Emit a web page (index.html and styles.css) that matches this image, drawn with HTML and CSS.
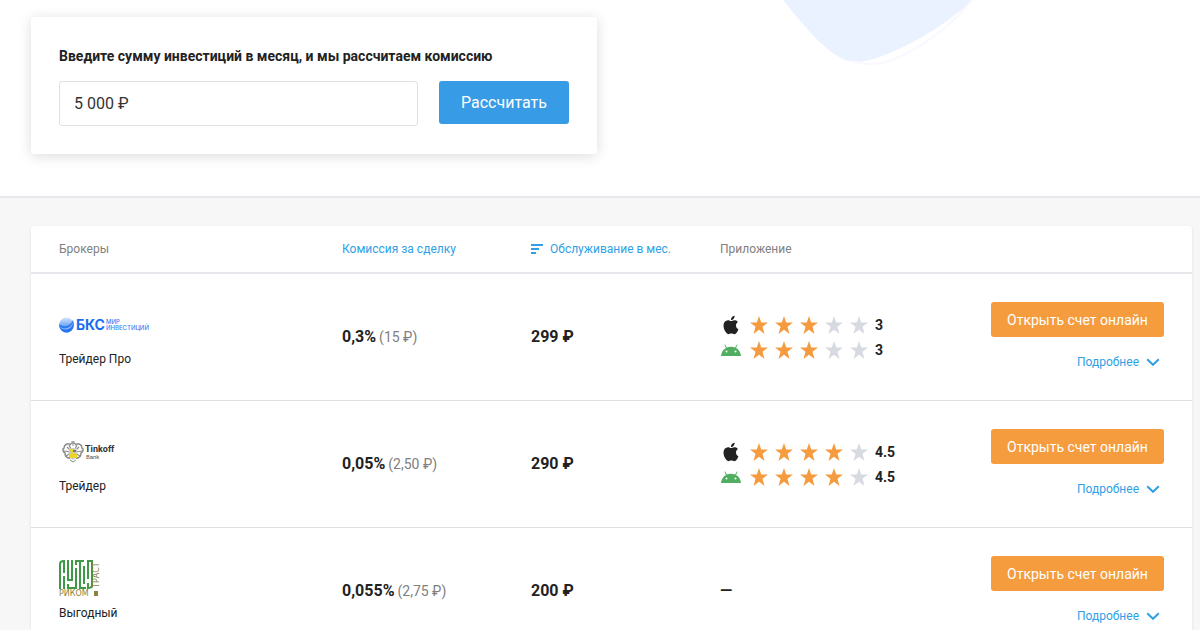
FILE: index.html
```html
<!DOCTYPE html>
<html lang="ru">
<head>
<meta charset="utf-8">
<title>Сравнение брокеров</title>
<meta name="viewport" content="width=device-width, initial-scale=1">
<link rel="stylesheet" href="styles.css">
</head>
<body>
<svg class="defs" width="0" height="0" aria-hidden="true">
  <symbol id="star" viewBox="0 0 18 18"><path d="M9 0l2.200 6.600H18l-5.500 4.200L14.500 18 9 13.700 3.500 18l2-7.200L0 6.600h6.800z"/></symbol>
  <symbol id="apple" viewBox="0 0 24 24"><path d="M18.710 19.500c-.83 1.240-1.710 2.450-3.050 2.470-1.340.03-1.770-.79-3.290-.79-1.530 0-2 .77-3.270.82-1.310.05-2.300-1.320-3.140-2.530C4.250 17 2.940 12.450 4.700 9.390c.87-1.520 2.430-2.480 4.120-2.510 1.280-.02 2.500.87 3.290.87.78 0 2.260-1.070 3.810-.91.65.03 2.470.26 3.640 1.980-.09.06-2.170 1.280-2.150 3.810.03 3.020 2.650 4.030 2.680 4.040-.03.07-.42 1.440-1.380 2.830M13 3.500c.73-.83 1.940-1.460 2.940-1.500.13 1.170-.34 2.350-1.040 3.190-.69.85-1.830 1.510-2.950 1.420-.15-1.150.41-2.350 1.050-3.110z"/></symbol>
  <symbol id="android" viewBox="0 0 20 12"><path d="M0 12C.3 8.300 2.200 5.500 5 4L3.400.8l.7-.4L5.900 3.600a10.500 10.500 0 0 1 8.200 0L15.900.4l.7.4L15 4c2.800 1.500 4.700 4.300 5 8zM5.500 8.600a1 1 0 1 0 0-2 1 1 0 0 0 0 2zm9 0a1 1 0 1 0 0-2 1 1 0 0 0 0 2z"/></symbol>
  <symbol id="chevron" viewBox="0 0 14 8"><path d="M1.200 1.200L7 6.800l5.800-5.600" fill="none" stroke="currentColor" stroke-width="2"/></symbol>
</svg>

<header class="hero">
  <svg class="blob" viewBox="0 0 200 70" width="200" height="70" aria-hidden="true">
    <path d="M3 0C25 27 52 62 76 62C103 62 165 28 192 0" fill="#ebf2ff"/>
    <path d="M72 61C84 65 96 66 112 60C140 49 170 27 192 0" fill="none" stroke="#f8f9fe" stroke-width="2"/>
  </svg>
  <form class="calc">
    <label class="calc-label" for="sum">Введите сумму инвестиций в месяц, и мы рассчитаем комиссию</label>
    <div class="calc-row">
      <input class="calc-input" id="sum" type="text" value="5 000 ₽">
      <button class="calc-button" type="button">Рассчитать</button>
    </div>
  </form>
</header>

<main class="content">
  <table class="brokers">
    <thead>
      <tr>
        <th class="col-name" scope="col">Брокеры</th>
        <th class="col-value" scope="col"><a class="sort" href="#">Комиссия за сделку</a></th>
        <th class="col-value" scope="col"><a class="sort" href="#"><svg class="sort-icon" viewBox="0 0 12 10" width="12" height="10" aria-hidden="true"><path d="M0 1h12M0 5h8M0 9h5" stroke="currentColor" stroke-width="2"/></svg>Обслуживание в мес.</a></th>
        <th scope="col">Приложение</th>
        <th scope="col"></th>
      </tr>
    </thead>
    <tbody>
      <tr>
        <td>
          <svg class="logo" viewBox="0 0 90 40" width="90" height="40" role="img" aria-label="БКС Мир инвестиций">
            <defs><linearGradient id="globe" x1="0" y1="0" x2="0" y2="1"><stop offset="0" stop-color="#d5e5fc"/><stop offset="1" stop-color="#2575ee"/></linearGradient></defs>
            <circle cx="7.500" cy="20" r="7.500" fill="url(#globe)"/>
            <path d="M0 19C3 22 10 23 14 15C17 22 12 28 7 27.500C3 27 0 23 0 19z" fill="#1b6ff0" opacity=".75"/>
            <path d="M1 22c5 3 10 1 13-4-1 6-8 9-13 4z" fill="#8bb8fa"/>
            <text class="logo-bks" x="17" y="25">БКС</text>
            <text class="logo-tiny" x="47" y="19">МИР</text>
            <text class="logo-tiny" x="47" y="25">ИНВЕСТИЦИЙ</text>
          </svg>
          <div class="plan">Трейдер Про</div>
        </td>
        <td><b class="amount">0,3%</b> <span class="note">(15 ₽)</span></td>
        <td><b class="amount">299 ₽</b></td>
        <td>
          <div class="rating"><svg class="os os-apple"><use href="#apple"/></svg><svg class="star on"><use href="#star"/></svg><svg class="star on"><use href="#star"/></svg><svg class="star on"><use href="#star"/></svg><svg class="star"><use href="#star"/></svg><svg class="star"><use href="#star"/></svg><span class="score">3</span></div>
          <div class="rating"><svg class="os os-android"><use href="#android"/></svg><svg class="star on"><use href="#star"/></svg><svg class="star on"><use href="#star"/></svg><svg class="star on"><use href="#star"/></svg><svg class="star"><use href="#star"/></svg><svg class="star"><use href="#star"/></svg><span class="score">3</span></div>
        </td>
        <td><div class="actions"><button class="open" type="button">Открыть счет онлайн</button><a class="more" href="#">Подробнее<svg class="chevron"><use href="#chevron"/></svg></a></div></td>
      </tr>
      <tr>
        <td>
          <svg class="logo" viewBox="0 0 90 40" width="90" height="40" role="img" aria-label="Tinkoff Bank">
            <g fill="none" stroke="#8c8c8c">
              <path d="M12 13C9 10 5 13 5 16c-2 1-1 4 1 5 0 3 2 5 5 5M16 13c3-3 7 0 7 3 2 1 1 4-1 5 0 3-2 5-5 5" stroke-width="1.500"/>
              <path d="M8 15l4 4M5 19l6 1M7 24l5-3M20 15l-4 4M23 19l-6 1M21 24l-5-3M10 13l2 4M18 13l-2 4M10 27l2-4M18 27l-2-4" stroke-width="1.200"/>
              <path d="M11 12l3-1 3 1M12 10h4M14 9v5M11 28l3 2 3-2" stroke-width="1"/>
            </g>
            <path d="M10 16h8v9l-4 3-4-3z" fill="#c9c9c9"/>
            <path d="M11 17h3v4l4 1v4h-7v-4h1z" fill="#ecd52b"/>
            <path d="M14 18h3v2h-3z" fill="#777"/>
            <text class="logo-tinkoff" x="26" y="20">Tinkoff</text>
            <text class="logo-bank" x="27" y="27">Bank</text>
          </svg>
          <div class="plan">Трейдер</div>
        </td>
        <td><b class="amount">0,05%</b> <span class="note">(2,50 ₽)</span></td>
        <td><b class="amount">290 ₽</b></td>
        <td>
          <div class="rating"><svg class="os os-apple"><use href="#apple"/></svg><svg class="star on"><use href="#star"/></svg><svg class="star on"><use href="#star"/></svg><svg class="star on"><use href="#star"/></svg><svg class="star on"><use href="#star"/></svg><svg class="star"><use href="#star"/></svg><span class="score">4.5</span></div>
          <div class="rating"><svg class="os os-android"><use href="#android"/></svg><svg class="star on"><use href="#star"/></svg><svg class="star on"><use href="#star"/></svg><svg class="star on"><use href="#star"/></svg><svg class="star on"><use href="#star"/></svg><svg class="star"><use href="#star"/></svg><span class="score">4.5</span></div>
        </td>
        <td><div class="actions"><button class="open" type="button">Открыть счет онлайн</button><a class="more" href="#">Подробнее<svg class="chevron"><use href="#chevron"/></svg></a></div></td>
      </tr>
      <tr>
        <td>
          <svg class="logo" viewBox="0 0 90 40" width="90" height="40" role="img" aria-label="Риком-Траст">
            <g fill="none" stroke="#3f9a47" stroke-width="2">
              <path d="M1 30V5Q1 2 5 2V14M5 30V17M9 1V21H13V1M9 30V25M8 29H17V9M16 2H25M21 2V29H27M17 6V1M25 7V25M29 1V20M29 2H33V26Q33 29 29 29V24"/>
            </g>
            <text class="logo-rikom" x="0" y="37">РИКОМ</text>
            <path d="M35 32h4v5h-4z" fill="#8a843c"/>
            <text class="logo-rikom" transform="translate(40 29) rotate(-90)" x="0" y="0">ТРАСТ</text>
          </svg>
          <div class="plan">Выгодный</div>
        </td>
        <td><b class="amount">0,055%</b> <span class="note">(2,75 ₽)</span></td>
        <td><b class="amount">200 ₽</b></td>
        <td><b class="amount">—</b></td>
        <td><div class="actions"><button class="open" type="button">Открыть счет онлайн</button><a class="more" href="#">Подробнее<svg class="chevron"><use href="#chevron"/></svg></a></div></td>
      </tr>
    </tbody>
  </table>
</main>
</body>
</html>
```

FILE: styles.css
```css
* { box-sizing: border-box; }

body {
  margin: 0;
  background: #f7f7f7;
  color: #222;
  font-family: Roboto, "Noto Sans", sans-serif;
  font-size: 12px;
  line-height: 20px;
}

.defs { position: absolute; }

.hero {
  position: relative;
  padding: 17px 31px 42px;
  background: #fff;
  border-bottom: 2px solid #e8e8ec;
}

.blob {
  position: absolute;
  top: 0;
  left: 65%;
}

.calc {
  position: relative;
  max-width: 566px;
  padding: 29px 28px 28px;
  background: #fff;
  border-radius: 3px;
  box-shadow: 0 2px 14px rgba(0, 0, 0, .14);
}

.calc-label {
  display: block;
  margin-bottom: 15px;
  font-size: 14px;
  font-weight: 700;
}

.calc-row {
  display: flex;
  align-items: flex-start;
  gap: 21px;
}

.calc-input {
  flex: 1;
  min-width: 0;
  height: 45px;
  padding: 0 14px;
  border: 1px solid #dfe0e6;
  border-radius: 3px;
  color: #333;
  font: inherit;
  font-size: 16px;
}

.calc-button {
  width: 130px;
  height: 43px;
  padding: 0;
  border: 0;
  border-radius: 3px;
  background: #389be6;
  color: #fff;
  font: inherit;
  font-size: 16px;
}

.content { padding: 28px 8px 28px 31px; }

.brokers {
  width: 100%;
  table-layout: fixed;
  border-collapse: separate;
  border-spacing: 0;
  background: #fff;
  border-radius: 3px;
  box-shadow: 0 1px 3px rgba(0, 0, 0, .1);
}

.col-name { width: 311px; }
.col-value { width: 189px; }

th {
  height: 48px;
  padding: 0;
  border-bottom: 2px solid #e8e8ec;
  color: #808080;
  font-weight: 400;
  text-align: left;
}

td {
  padding: 0;
  border-bottom: 1px solid #dedfe3;
  vertical-align: middle;
}

th:first-child { padding-left: 28px; }
td:first-child { padding: 31px 0 31px 28px; }
td:last-child { padding-right: 28px; }

.sort {
  display: flex;
  align-items: center;
  gap: 7px;
  color: #309fe5;
  text-decoration: none;
}

.logo {
  display: block;
  margin-bottom: 4px;
}

.logo text { font-family: Roboto, sans-serif; }
.logo .logo-bks { font-family: Inter, sans-serif; font-size: 14px; font-weight: 700; fill: #176cf0; }
.logo .logo-tiny { font-family: Inter, sans-serif; font-size: 6px; font-weight: 500; fill: #3b82f3; }
.logo-tinkoff { font-size: 9px; font-weight: 700; fill: #333; }
.logo-bank { font-size: 6px; fill: #555; }
.logo .logo-rikom { font-family: "DejaVu Sans", sans-serif; font-size: 8px; fill: #8a843c; }

.amount { font-size: 16px; }
.note { color: #808080; font-size: 14px; }

.rating {
  display: flex;
  align-items: center;
  gap: 7px;
  height: 25px;
}

.os { width: 22px; margin-right: 1px; }
.os-apple { height: 22px; fill: #222; }
.os-android { height: 12px; fill: #4fae60; }
.star { width: 18px; height: 18px; fill: #d8dae1; }
.star.on { fill: #f59b3f; }
.score { font-size: 14px; font-weight: 700; }

.actions {
  display: flex;
  flex-direction: column;
  align-items: flex-end;
  gap: 15px;
}

.open {
  width: 173px;
  height: 35px;
  padding: 0;
  border: 0;
  border-radius: 3px;
  background: #f59c3f;
  color: #fff;
  font: inherit;
  font-size: 14px;
}

.more {
  display: flex;
  align-items: center;
  gap: 7px;
  padding-right: 4px;
  color: #309fe5;
  text-decoration: none;
}

.chevron { width: 14px; height: 8px; }
```
